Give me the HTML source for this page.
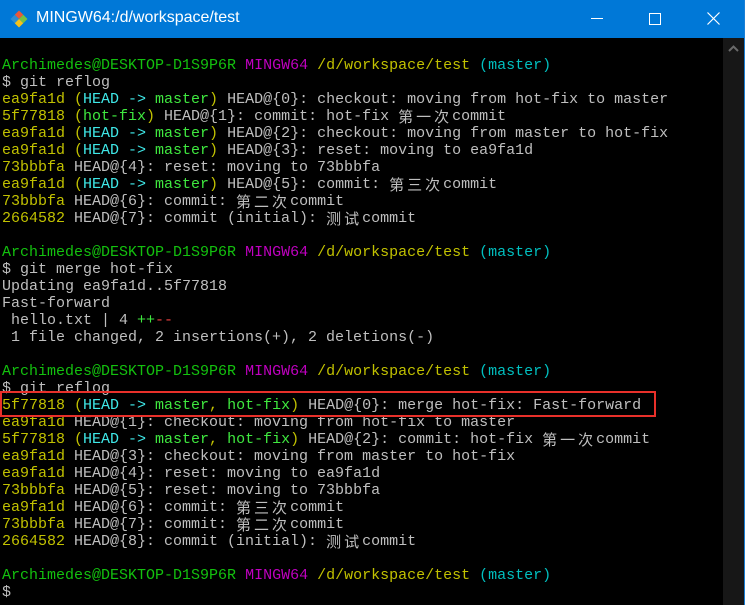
<!DOCTYPE html>
<html><head><meta charset="utf-8"><style>
html,body{margin:0;padding:0;width:745px;height:605px;overflow:hidden;background:#000}
.win{position:absolute;left:0;top:0;width:745px;height:605px;background:#000;overflow:hidden}
.title{position:absolute;left:0;top:0;width:745px;height:38px;background:#0078d7;color:#fff;font-family:"Segoe UI","Liberation Sans",sans-serif;font-size:16px}
.title .t{position:absolute;left:36px;top:9px}
.scroll{position:absolute;left:723px;top:38px;width:21px;height:567px;background:#171717}
.bord{position:absolute;left:744px;top:0;width:1px;height:605px;background:#1a7fd6}
.term{position:absolute;left:2px;top:57px;font-family:"Liberation Mono",monospace;font-size:15px;line-height:17px;color:#bfbfbf}
.term div{height:17px;white-space:pre}
.g{color:#13c10e}.m{color:#bf00bf}.y{color:#c1c100}.c{color:#00bfbf}.C{color:#3fe8e8}.G{color:#3fe83f}.r{color:#e84040}
.z{display:inline-block;height:17px;line-height:17px;vertical-align:top;overflow:visible;letter-spacing:3px;font-family:"Noto Sans CJK SC",sans-serif;font-size:15px}
.box{position:absolute;left:0;top:391px;width:652px;height:22px;border:2px solid #e8302a}
</style></head><body><div class="win">
<div class="title">
<svg style="position:absolute;left:10px;top:10px" width="18" height="18" viewBox="0 0 18 18"><g transform="rotate(45 9 9)"><rect x="3" y="3" width="6" height="6" fill="#e8573a"/><rect x="9" y="3" width="6" height="6" fill="#75c043"/><rect x="3" y="9" width="6" height="6" fill="#2a8dd4"/><rect x="9" y="9" width="6" height="6" fill="#f4c21b"/></g></svg>
<span class="t">MINGW64:/d/workspace/test</span>
<div style="position:absolute;left:591px;top:18px;width:12px;height:1px;background:#fff"></div>
<div style="position:absolute;left:649px;top:13px;width:10px;height:10px;border:1px solid #fff"></div>
<svg style="position:absolute;left:707px;top:12px" width="13" height="13"><path d="M0.5 0.5L12.5 12.5M12.5 0.5L0.5 12.5" stroke="#fff" stroke-width="1.2"/></svg>
</div>
<div class="scroll"><svg style="position:absolute;left:5px;top:7px" width="11" height="7"><path d="M1 6L5.5 1.5L10 6" stroke="#6a6a6a" stroke-width="2" fill="none"/></svg></div>
<div class="bord"></div>
<div class="term"><div><span class="g">Archimedes@DESKTOP-D1S9P6R</span> <span class="m">MINGW64</span> <span class="y">/d/workspace/test</span> <span class="c">(master)</span></div><div>$ git reflog</div><div><span class="y">ea9fa1d (<span class="C">HEAD -&gt; </span><span class="G">master</span>)</span> HEAD@{0}: checkout: moving from hot-fix to master</div><div><span class="y">5f77818 (<span class="G">hot-fix</span>)</span> HEAD@{1}: commit: hot-fix <span class="z">第一次</span>commit</div><div><span class="y">ea9fa1d (<span class="C">HEAD -&gt; </span><span class="G">master</span>)</span> HEAD@{2}: checkout: moving from master to hot-fix</div><div><span class="y">ea9fa1d (<span class="C">HEAD -&gt; </span><span class="G">master</span>)</span> HEAD@{3}: reset: moving to ea9fa1d</div><div><span class="y">73bbbfa</span> HEAD@{4}: reset: moving to 73bbbfa</div><div><span class="y">ea9fa1d (<span class="C">HEAD -&gt; </span><span class="G">master</span>)</span> HEAD@{5}: commit: <span class="z">第三次</span>commit</div><div><span class="y">73bbbfa</span> HEAD@{6}: commit: <span class="z">第二次</span>commit</div><div><span class="y">2664582</span> HEAD@{7}: commit (initial): <span class="z">测试</span>commit</div><div> </div><div><span class="g">Archimedes@DESKTOP-D1S9P6R</span> <span class="m">MINGW64</span> <span class="y">/d/workspace/test</span> <span class="c">(master)</span></div><div>$ git merge hot-fix</div><div>Updating ea9fa1d..5f77818</div><div>Fast-forward</div><div> hello.txt | 4 <span class="G">++</span><span class="r">--</span></div><div> 1 file changed, 2 insertions(+), 2 deletions(-)</div><div> </div><div><span class="g">Archimedes@DESKTOP-D1S9P6R</span> <span class="m">MINGW64</span> <span class="y">/d/workspace/test</span> <span class="c">(master)</span></div><div>$ git reflog</div><div><span class="y">5f77818 (<span class="C">HEAD -&gt; </span><span class="G">master</span>, <span class="G">hot-fix</span>)</span> HEAD@{0}: merge hot-fix: Fast-forward</div><div><span class="y">ea9fa1d</span> HEAD@{1}: checkout: moving from hot-fix to master</div><div><span class="y">5f77818 (<span class="C">HEAD -&gt; </span><span class="G">master</span>, <span class="G">hot-fix</span>)</span> HEAD@{2}: commit: hot-fix <span class="z">第一次</span>commit</div><div><span class="y">ea9fa1d</span> HEAD@{3}: checkout: moving from master to hot-fix</div><div><span class="y">ea9fa1d</span> HEAD@{4}: reset: moving to ea9fa1d</div><div><span class="y">73bbbfa</span> HEAD@{5}: reset: moving to 73bbbfa</div><div><span class="y">ea9fa1d</span> HEAD@{6}: commit: <span class="z">第三次</span>commit</div><div><span class="y">73bbbfa</span> HEAD@{7}: commit: <span class="z">第二次</span>commit</div><div><span class="y">2664582</span> HEAD@{8}: commit (initial): <span class="z">测试</span>commit</div><div> </div><div><span class="g">Archimedes@DESKTOP-D1S9P6R</span> <span class="m">MINGW64</span> <span class="y">/d/workspace/test</span> <span class="c">(master)</span></div><div>$</div></div>
<div class="box"></div>
</div></body></html>
